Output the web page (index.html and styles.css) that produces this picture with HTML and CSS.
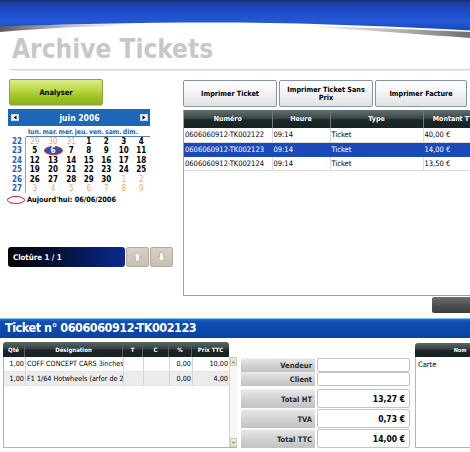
FILE: index.html
```html
<!DOCTYPE html>
<html>
<head>
<meta charset="utf-8">
<title>Archive Tickets</title>
<link rel="stylesheet" href="styles.css">
</head>
<body>
<div class="page">
  <svg class="banner" width="470" height="38" viewBox="0 0 470 38">
    <defs>
      <linearGradient id="bl" x1="0" y1="0" x2="0" y2="1">
        <stop offset="0" stop-color="#1a2d70"/>
        <stop offset="0.07" stop-color="#1c3c9a"/>
        <stop offset="0.35" stop-color="#1a4cc6"/>
        <stop offset="0.7" stop-color="#2458d4"/>
        <stop offset="1" stop-color="#1648be"/>
      </linearGradient>
      <linearGradient id="gl" x1="0" y1="0" x2="1" y2="0">
        <stop offset="0" stop-color="#5a5a5a"/>
        <stop offset="1" stop-color="#8a8a8a" stop-opacity="0"/>
      </linearGradient>
      <linearGradient id="gr" x1="0" y1="0" x2="1" y2="0">
        <stop offset="0" stop-color="#9a9a9a" stop-opacity="0"/>
        <stop offset="1" stop-color="#6e6e6e"/>
      </linearGradient>
    </defs>
    <path d="M0,26 C40,25 80,24 130,24 L130,25.5 C80,26.5 40,28.5 0,32 Z" fill="url(#gl)"/>
    <path d="M290,25.5 C370,27.5 425,30 470,32 L470,38 C420,34.5 360,29.5 290,25.5 Z" fill="url(#gr)"/>
    <path d="M0,0 H470 V30.5 C400,26.5 320,23.5 240,22.5 C150,22 70,24 0,26.5 Z" fill="url(#bl)"/>
  </svg>

  <h1 class="title">Archive Tickets</h1>
  <div class="rule"></div>

  <div class="main">
    <div class="left">
      <div class="analyse">Analyser</div>

      <div class="cal">
        <div class="cal-head">
          <span class="nav"><svg width="6" height="5" viewBox="0 0 6 5"><path d="M4.5,0.5 L1.5,2.5 L4.5,4.5 Z" fill="#000"/></svg></span>
          <span class="cal-month">juin 2006</span>
          <span class="nav"><svg width="6" height="5" viewBox="0 0 6 5"><path d="M1.5,0.5 L4.5,2.5 L1.5,4.5 Z" fill="#000"/></svg></span>
        </div>
        <div class="cal-names">
          <span>lun.</span><span>mar.</span><span>mer.</span><span>jeu.</span><span>ven.</span><span>sam.</span><span>dim.</span>
        </div>
        <div class="cal-grid">
          <span class="wk">22</span><span class="d o">29</span><span class="d o">30</span><span class="d o">31</span><span class="d">1</span><span class="d">2</span><span class="d">3</span><span class="d">4</span>
          <span class="wk">23</span><span class="d">5</span><span class="d"><span class="sel">6</span></span><span class="d">7</span><span class="d">8</span><span class="d">9</span><span class="d">10</span><span class="d">11</span>
          <span class="wk">24</span><span class="d">12</span><span class="d">13</span><span class="d">14</span><span class="d">15</span><span class="d">16</span><span class="d">17</span><span class="d">18</span>
          <span class="wk">25</span><span class="d">19</span><span class="d">20</span><span class="d">21</span><span class="d">22</span><span class="d">23</span><span class="d">24</span><span class="d">25</span>
          <span class="wk">26</span><span class="d">26</span><span class="d">27</span><span class="d">28</span><span class="d">29</span><span class="d">30</span><span class="d o">1</span><span class="d o">2</span>
          <span class="wk">27</span><span class="d o">3</span><span class="d o">4</span><span class="d o">5</span><span class="d o">6</span><span class="d o">7</span><span class="d o">8</span><span class="d o">9</span>
        </div>
        <div class="today"><span class="today-mark"></span>Aujourd'hui: 06/06/2006</div>
      </div>

      <div class="cloture">
        <div class="cloture-bar">Clotûre 1 / 1</div>
        <div class="arrow-btn"><svg width="9" height="10" viewBox="0 0 9 10"><path d="M4.5,0.8 L8.3,4.8 H6.2 V9.3 H2.8 V4.8 H0.7 Z" fill="#fff" stroke="#a89f90" stroke-width="0.6"/></svg></div>
        <div class="arrow-btn"><svg width="9" height="10" viewBox="0 0 9 10"><path d="M4.5,9.2 L8.3,5.2 H6.2 V0.7 H2.8 V5.2 H0.7 Z" fill="#fff" stroke="#a89f90" stroke-width="0.6"/></svg></div>
      </div>
    </div>

    <div class="right">
      <div class="actions">
        <div class="act">Imprimer Ticket</div>
        <div class="act">Imprimer Ticket Sans<br>Prix</div>
        <div class="act act-last">Imprimer Facture</div>
      </div>
      <div class="list">
        <table class="tickets">
          <colgroup><col class="c-num"><col class="c-hr"><col class="c-type"><col class="c-mt"></colgroup>
          <thead>
            <tr><th>Numéro</th><th>Heure</th><th>Type</th><th>Montant TTC</th></tr>
          </thead>
          <tbody>
            <tr><td>0606060912-TK002122</td><td>09:14</td><td>Ticket</td><td>40,00 €</td></tr>
            <tr class="selected"><td>0606060912-TK002123</td><td>09:14</td><td>Ticket</td><td>14,00 €</td></tr>
            <tr><td>0606060912-TK002124</td><td>09:14</td><td>Ticket</td><td>13,50 €</td></tr>
          </tbody>
        </table>
      </div>
      <div class="dark-row"><span class="dark-btn"></span></div>
    </div>
  </div>

  <div class="ticket-bar">Ticket n° 0606060912-TK002123</div>

  <div class="ticket-body">
    <div class="lines">
      <div class="lines-head">
        <span class="l-qte">Qté</span><span class="l-des">Désignation</span><span class="l-t">T</span><span class="l-c">C</span><span class="l-pc">%</span><span class="l-px">Prix TTC</span>
      </div>
      <div class="lines-box">
        <div class="lines-rows">
          <div class="lrow">
            <span class="l-qte num">1,00</span><span class="l-des">COFF CONCEPT CARS 3inches</span><span class="l-t"></span><span class="l-c"></span><span class="l-pc num">0,00</span><span class="l-px num">10,00</span>
          </div>
          <div class="lrow alt">
            <span class="l-qte num">1,00</span><span class="l-des">F1 1/64 Hotwheels (arfor de 2-</span><span class="l-t"></span><span class="l-c"></span><span class="l-pc num">0,00</span><span class="l-px num">4,00</span>
          </div>
        </div>
        <div class="scroll">
          <span class="sb"><svg width="5" height="4" viewBox="0 0 5 4"><path d="M0.5,3.3 L2.5,0.8 L4.5,3.3 Z" fill="#9a9480"/></svg></span>
          <span class="sb"><svg width="5" height="4" viewBox="0 0 5 4"><path d="M0.5,0.7 L2.5,3.2 L4.5,0.7 Z" fill="#9a9480"/></svg></span>
        </div>
      </div>
    </div>

    <div class="summary">
      <div class="sgroup">
        <div class="srow"><span class="slabel">Vendeur</span><span class="sval"></span></div>
        <div class="srow"><span class="slabel">Client</span><span class="sval"></span></div>
      </div>
      <div class="sgroup totals">
        <div class="srow big"><span class="slabel">Total HT</span><span class="sval">13,27 €</span></div>
        <div class="srow big"><span class="slabel">TVA</span><span class="sval">0,73 €</span></div>
        <div class="srow big"><span class="slabel">Total TTC</span><span class="sval">14,00 €</span></div>
      </div>
    </div>

    <div class="payments">
      <div class="pay-head">Nom</div>
      <div class="pay-box"><div class="pay-row">Carte</div></div>
    </div>
  </div>
</div>
</body>
</html>
```

FILE: styles.css
```css
* { box-sizing: border-box; margin: 0; padding: 0; }

html, body {
  width: 470px;
  height: 452px;
  overflow: hidden;
  background: #fff;
}

body {
  font-family: "DejaVu Sans Condensed", "DejaVu Sans", sans-serif;
  font-stretch: condensed;
  color: #000;
}

.page { width: 470px; height: 452px; overflow: hidden; }

.banner { display: block; }

.title {
  font-size: 26px;
  line-height: 22px;
  font-weight: bold;
  color: #c8c8c8;
  padding-left: 12px;
  white-space: nowrap;
}

.rule {
  margin: 9px 0 0 10px;
  height: 1px;
  background: #d6d6d6;
  box-shadow: 0 1px 0 #efefef;
}

.main {
  display: flex;
  height: 246px;
}

.left {
  width: 183px;
  padding-left: 8px;
  flex: none;
}

.analyse {
  margin-top: 9px;
  margin-left: 1px;
  width: 94px;
  height: 26px;
  border: 1px solid #8fa24a;
  border-radius: 2px;
  background: linear-gradient(#dcec8a 0%, #c0dc50 35%, #9fc424 70%, #8cb414 100%);
  font-size: 7.5px;
  font-weight: bold;
  display: flex;
  align-items: center;
  justify-content: center;
  box-shadow: 0 1px 1px rgba(0,0,0,0.25);
}

.cal {
  margin-top: 4px;
  width: 142px;
}

.cal-head {
  height: 17px;
  background: #1d66b8;
  display: flex;
  align-items: center;
  justify-content: space-between;
  padding: 0 2px 0 3px;
  color: #fff;
  font-size: 8.5px;
  font-weight: bold;
}

.nav {
  width: 8px;
  height: 7px;
  background: #f4f4f4;
  border: 1px solid #c8d4e4;
  display: flex;
  align-items: center;
  justify-content: center;
}

.nav svg { display: block; }

.cal-names {
  margin-left: 18px;
  height: 11px;
  border-bottom: 1px solid #5580bb;
  display: flex;
  justify-content: space-between;
  align-items: center;
  padding: 1px 12px 0 2px;
  color: #2d60b4;
  font-size: 6.8px;
  font-weight: bold;
}

.cal-grid {
  display: grid;
  grid-template-columns: 18px repeat(7, 1fr);
  grid-auto-rows: 9.4px;
  font-size: 8px;
  font-weight: bold;
  line-height: 9.4px;
}

.wk {
  color: #2d60b4;
  text-align: right;
  padding-right: 3px;
  border-right: 1px solid #8aa6cf;
}

.d { text-align: center; position: relative; }
.d.o { color: #f2a56a; font-weight: normal; }

.sel {
  display: inline-block;
  width: 19px;
  height: 9px;
  line-height: 7px;
  border: 1px solid #e02a2a;
  border-radius: 50%;
  background: #1f55b6;
  color: #fff;
}

.today {
  margin-top: 1px;
  display: flex;
  align-items: center;
  height: 11px;
  font-size: 7.3px;
  font-weight: bold;
  margin-left: -1px;
}

.today-mark {
  width: 18px;
  height: 8px;
  border: 1.5px solid #e02626;
  border-radius: 50%;
  margin-right: 2px;
}

.cloture {
  margin-top: 42px;
  display: flex;
  gap: 1px;
  height: 20px;
}

.cloture-bar {
  width: 117px;
  height: 20px;
  border-radius: 3px;
  background: linear-gradient(90deg, #020208 0%, #05123e 45%, #0a2a8e 100%);
  color: #fff;
  font-size: 7.8px;
  font-weight: bold;
  display: flex;
  align-items: center;
  padding-left: 5px;
}

.arrow-btn {
  width: 23px;
  height: 20px;
  border: 1px solid #b4ab9c;
  border-radius: 2px;
  background: linear-gradient(#d8d1c6, #c7bfb2);
  display: flex;
  align-items: center;
  justify-content: center;
}

.arrow-btn svg { display: block; }

.right {
  flex: 1;
  min-width: 0;
  overflow: hidden;
}

.actions {
  margin-top: 10px;
  display: flex;
  gap: 2px;
  height: 27px;
}

.act {
  width: 94px;
  height: 27px;
  flex: none;
  border: 1px solid #8393aa;
  border-radius: 2px;
  background: linear-gradient(#ffffff 0%, #f2f2f2 50%, #e2e2e2 100%);
  font-size: 7.2px;
  font-weight: bold;
  line-height: 8px;
  display: flex;
  align-items: center;
  justify-content: center;
  text-align: center;
  padding: 0 2px;
  white-space: nowrap;
}

.act-last { width: 92px; }

.list {
  margin-top: 3px;
  height: 186px;
  border-left: 1px solid #a0a0a0;
  border-bottom: 1px solid #a0a0a0;
  overflow: hidden;
}

.tickets {
  border-collapse: collapse;
  table-layout: fixed;
  width: 304px;
}

.c-num { width: 88px; }
.c-hr { width: 58px; }
.c-type { width: 93px; }
.c-mt { width: 65px; }

.tickets th {
  height: 18px;
  background: linear-gradient(#62706f 0%, #3a4848 45%, #1c2626 55%, #1a2323 100%);
  color: #fff;
  font-size: 7px;
  font-weight: bold;
  border-right: 1px solid #6a7878;
  text-align: center;
  white-space: nowrap;
  overflow: hidden;
}

.tickets td {
  height: 14px;
  font-size: 7.5px;
  border-right: 1px solid #dcdcdc;
  border-bottom: 1px solid #dcdcdc;
  padding: 0 1px;
  white-space: nowrap;
  overflow: hidden;
}

.tickets tr.selected td {
  background: #1c49b8;
  color: #fff;
  border-color: #1c49b8;
}

.dark-row {
  margin-top: 1px;
  display: flex;
  justify-content: flex-end;
}

.dark-btn {
  width: 38px;
  height: 16px;
  border-radius: 2px 0 0 2px;
  background: linear-gradient(#6e6e6e, #4a4a4a 60%, #3e3e3e);
}

.ticket-bar {
  margin-top: 2px;
  height: 20px;
  border-top: 1px solid #84c0ec;
  background: linear-gradient(#2a6cd0 0%, #0f4fb2 15%, #0c47aa 60%, #0a42a2 100%);
  color: #fff;
  font-size: 12.5px;
  letter-spacing: -0.45px;
  font-weight: bold;
  line-height: 18px;
  padding-left: 5px;
  white-space: nowrap;
}

.ticket-body {
  display: flex;
  align-items: flex-start;
  padding-left: 3px;
}

.lines {
  width: 234px;
  flex: none;
  margin-top: 4px;
}

.lines-head {
  display: flex;
  width: 226px;
  height: 15px;
  border-radius: 3px 3px 0 0;
  background: linear-gradient(#5a6868 0%, #34403f 45%, #1c2626 55%, #182020 100%);
  color: #fff;
  font-size: 6px;
  font-weight: bold;
  align-items: center;
}

.lines-head span {
  text-align: center;
  height: 15px;
  line-height: 15px;
  border-right: 1px solid #56605f;
}

.lines-head span:last-child { border-right: none; }

.l-qte { width: 22px; flex: none; }
.l-des { width: 98px; flex: none; }
.l-t { width: 20px; flex: none; }
.l-c { width: 26px; flex: none; }
.l-pc { width: 23px; flex: none; }
.l-px { width: 37px; flex: none; }

.lines-box {
  display: flex;
  height: 91px;
  border: 1px solid #b4b4b4;
  border-top: none;
}

.lines-rows { width: 225px; flex: none; }

.lrow {
  display: flex;
  height: 14.5px;
  font-size: 7.2px;
  line-height: 14px;
  border-bottom: 1px solid #e4e4e4;
}

.lrow.alt { background: #ececec; }

.lrow span {
  white-space: nowrap;
  overflow: hidden;
  border-right: 1px solid #d4d4d4;
  padding: 0 1px;
}

.lrow .num { text-align: right; }

.scroll {
  flex: 1;
  display: flex;
  flex-direction: column;
  justify-content: space-between;
  background: #f6f6f4;
  border-left: 1px solid #d8d4c8;
}

.sb {
  height: 9px;
  background: #ece8dc;
  border: 1px solid #cfc8b4;
  display: flex;
  align-items: center;
  justify-content: center;
}

.sb svg { display: block; }

.summary {
  width: 169px;
  flex: none;
  margin-left: 4px;
  margin-top: 20px;
}

.sgroup { display: flex; flex-direction: column; }

.totals { margin-top: 3px; gap: 1px; }

.srow {
  display: flex;
  gap: 2px;
  height: 14px;
}

.srow.big { height: 19px; }

.slabel {
  width: 74px;
  flex: none;
  background: linear-gradient(#e6e6e6 0%, #d2d2d2 50%, #c2c2c2 100%);
  border-top: 1px solid #f2f2f2;
  color: #2a2a2a;
  font-size: 7.5px;
  font-weight: bold;
  text-align: right;
  padding-right: 3px;
  display: flex;
  align-items: center;
  justify-content: flex-end;
}

.sval {
  flex: 1;
  border: 1px solid #c4c4c4;
  border-radius: 2px;
  background: #fff;
  font-size: 8.5px;
  font-weight: bold;
  display: flex;
  align-items: center;
  justify-content: flex-end;
  padding-right: 4px;
}

.payments {
  width: 90px;
  flex: none;
  margin-left: 5px;
  margin-top: 5px;
}

.pay-head {
  height: 14px;
  background: linear-gradient(#5a6868 0%, #34403f 45%, #1c2626 55%, #182020 100%);
  border-radius: 3px 3px 0 0;
  color: #fff;
  font-size: 5.5px;
  font-weight: bold;
  text-align: center;
  line-height: 14px;
}

.pay-box {
  height: 91px;
  border: 1px solid #b4b4b4;
  border-top: none;
}

.pay-row {
  font-size: 7.5px;
  padding: 3px 2px 0;
}
```
